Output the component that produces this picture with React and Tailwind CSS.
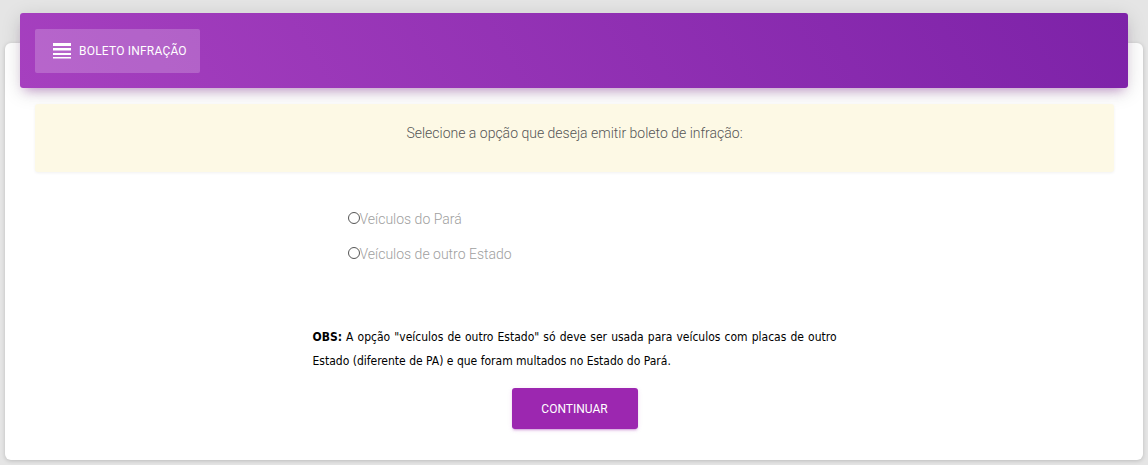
import React from "react";

const MenuIcon = () => (
	<svg width="18" height="16" viewBox="0 0 18 16" fill="white">
		<rect x="0" y="0" width="18" height="3" />
		<rect x="0" y="5" width="18" height="2.5" />
		<rect x="0" y="10" width="18" height="2" />
		<rect x="0" y="14" width="18" height="1.5" />
	</svg>
);

const Radio = ({ label }) => (
	<label className="flex items-center text-[14px] text-[#a0a0a0] font-['Roboto',sans-serif] font-light h-[20px]">
		<span className="inline-block w-[12px] h-[12px] rounded-full border border-[#555] -mt-[3px]" />
		<span>{label}</span>
	</label>
);

const App = () => {
	return (
		<div className="min-h-[465px] bg-[#e5e5e5] pt-[43px] px-[5px] font-['Roboto',sans-serif]">
			<div className="flex flex-col bg-white rounded-[6px] shadow-[0_1px_4px_0_rgba(0,0,0,0.18)] h-[417px]">
				{/* header */}
				<div className="mx-[15px] -mt-[30px] h-[75px] rounded-[3px] px-[15px] pt-[16px] bg-[linear-gradient(60deg,#a640bf,#7d22a8)] shadow-[0_4px_20px_0_rgba(0,0,0,0.14),0_7px_10px_-5px_rgba(156,39,176,0.4)]">
					<div className="inline-flex items-center h-[44px] w-[165px] pl-[18px] bg-white/20 rounded-[2px]">
						<MenuIcon />
						<span className="ml-[8px] text-white text-[12px] font-normal tracking-[0.2px]">
							BOLETO INFRAÇÃO
						</span>
					</div>
				</div>

				<div className="pl-[30px] pr-[29px] pt-[16px]">
					<div className="h-[68px] rounded-[3px] bg-[#fdf9e5] shadow-[0_1px_3px_rgba(0,0,0,0.06)] pt-[19px] text-center leading-[20px] text-[14px] font-light text-[#555]">
						Selecione a opção que deseja emitir boleto de infração:
					</div>

					<div className="w-[524px] mx-auto">
						<div className="pl-[35px] pt-[37px] flex flex-col gap-[15px]">
							<Radio label="Veículos do Pará" />
							<Radio label="Veículos de outro Estado" />
						</div>

						<p className="mt-[61px] text-[12px] leading-[24px] text-black text-justify font-['DejaVu_Sans_Condensed','Liberation_Sans',sans-serif]">
							<b>OBS:</b> A opção "veículos de outro Estado" só deve ser usada para veículos com placas de outro Estado (diferente de PA) e que foram multados no Estado do Pará.
						</p>

						<div className="flex justify-center mt-[15px]">
							<button className="w-[126px] h-[41px] rounded-[3px] bg-[#9c27b0] text-white text-[12px] font-['Roboto',sans-serif] shadow-[0_2px_2px_0_rgba(156,39,176,0.14),0_3px_1px_-2px_rgba(156,39,176,0.2),0_1px_5px_0_rgba(156,39,176,0.12)]">
								CONTINUAR
							</button>
						</div>
					</div>
				</div>
			</div>
		</div>
	);
};

export default App;
